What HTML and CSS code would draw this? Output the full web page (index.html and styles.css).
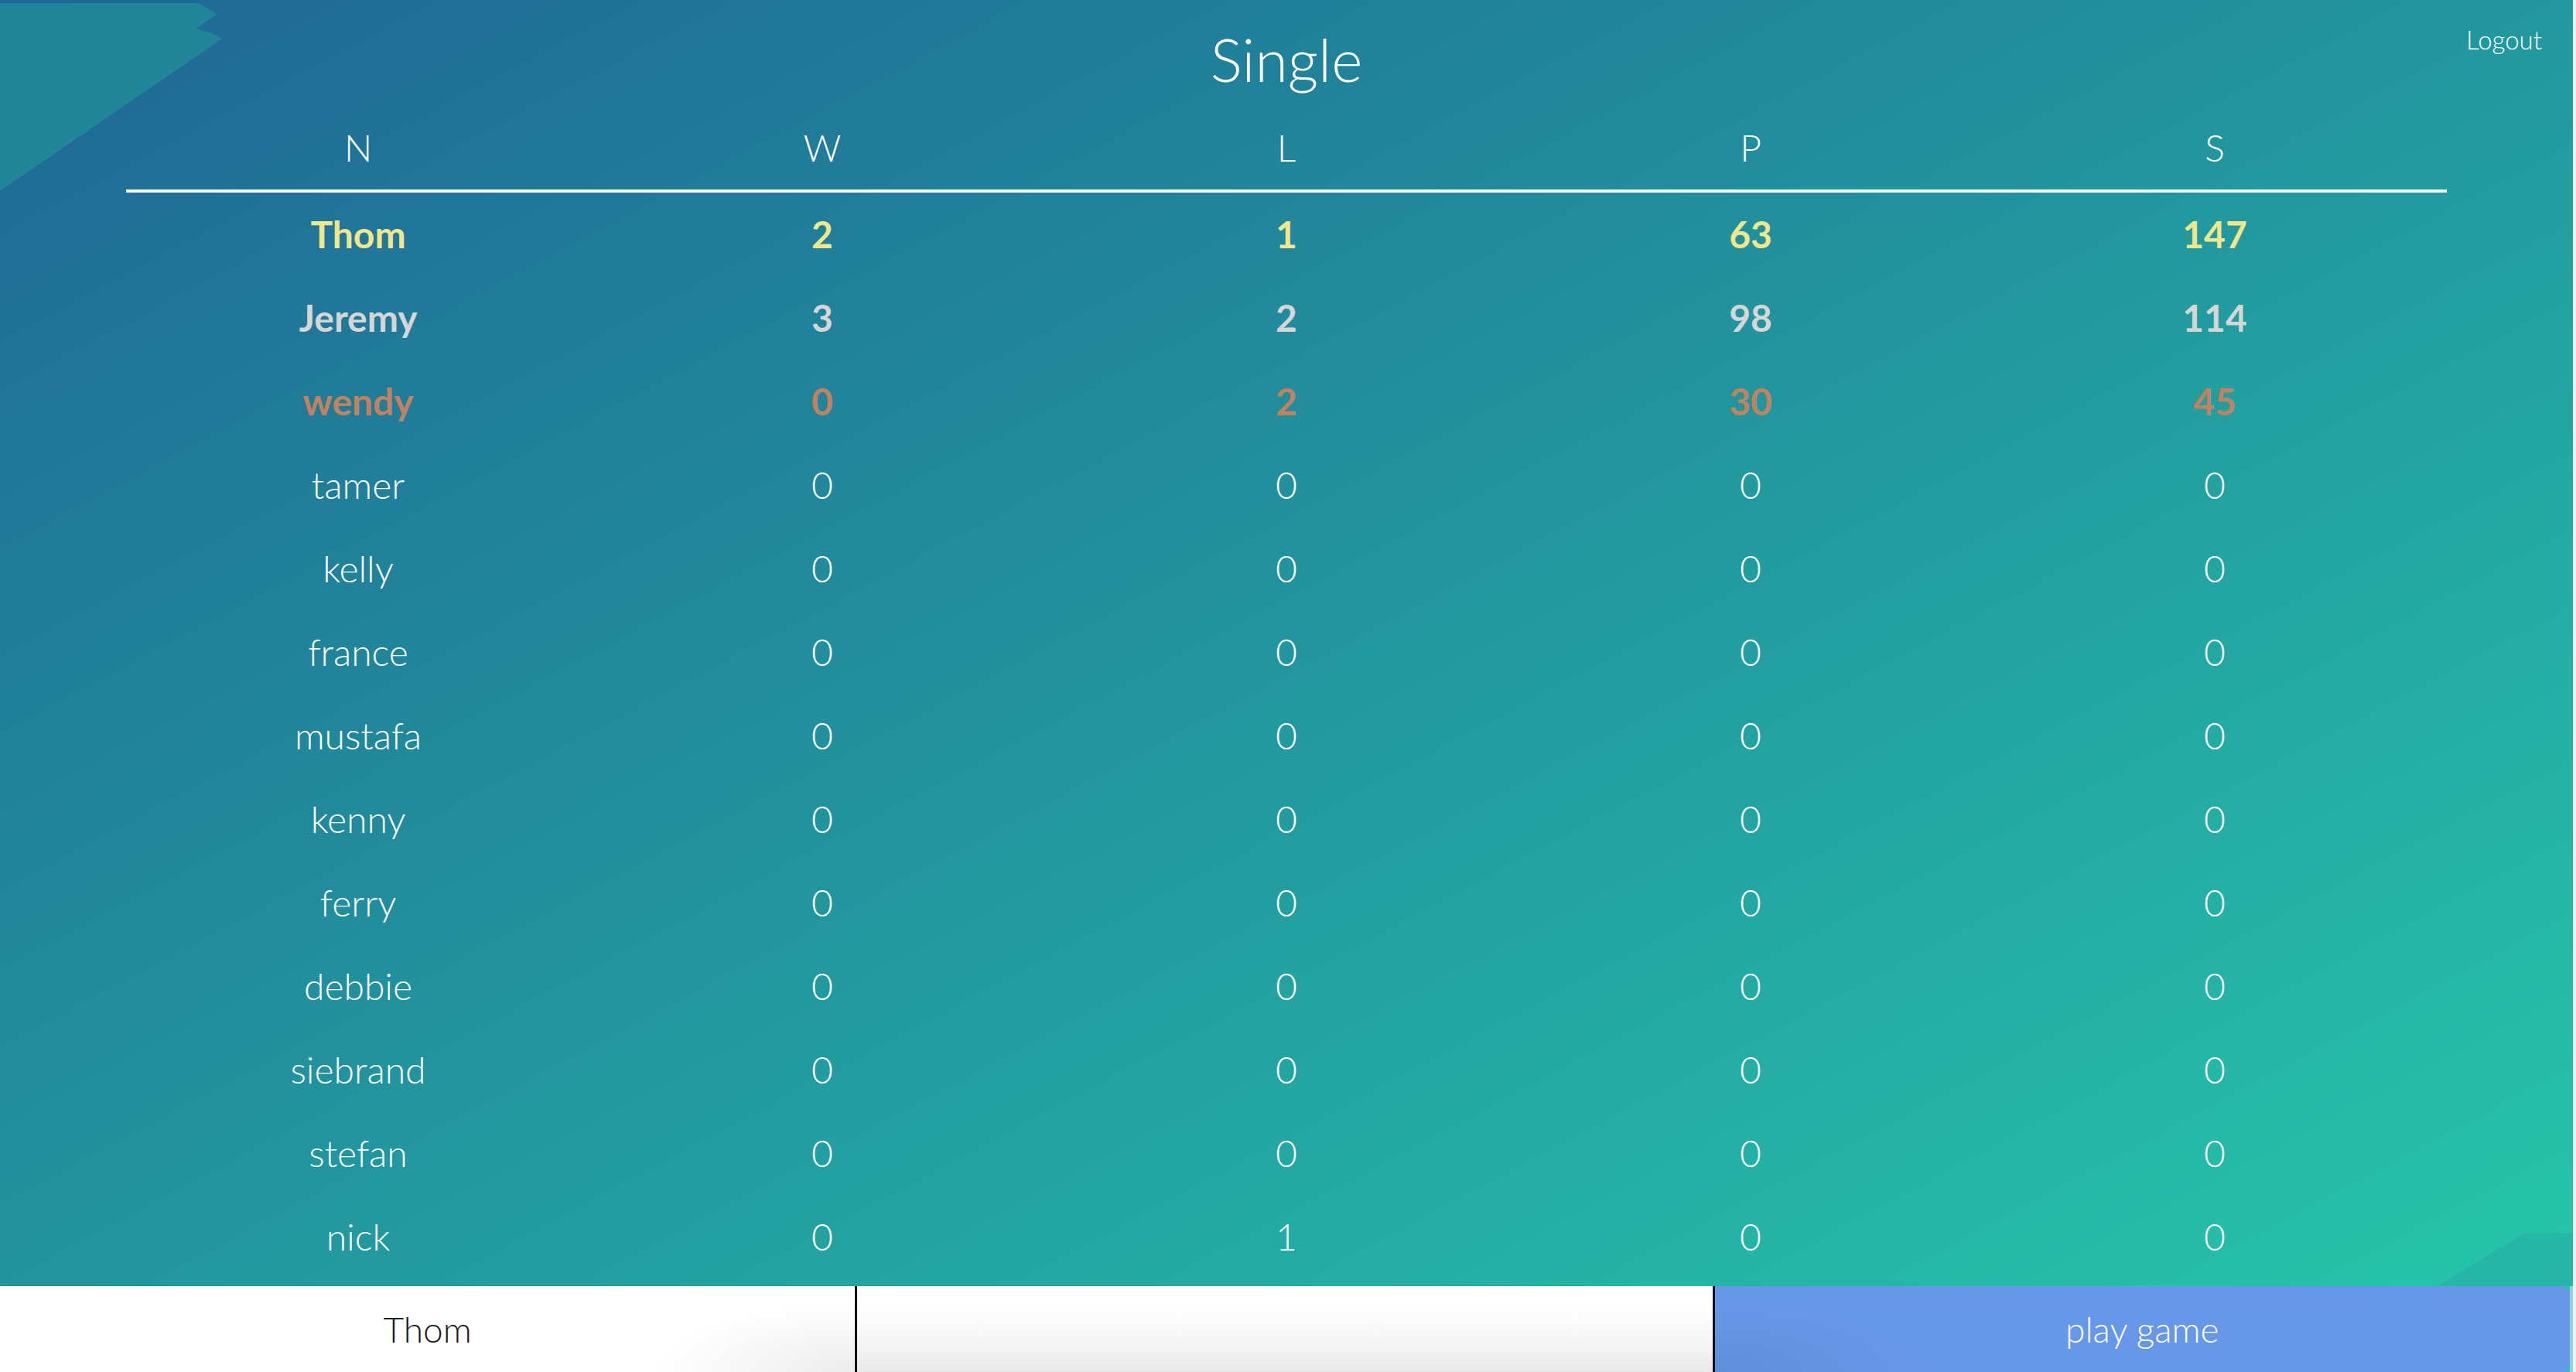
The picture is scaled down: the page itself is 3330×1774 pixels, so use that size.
FILE: index.html
```html
<!DOCTYPE html>
<html lang="en">
<head>
<meta charset="utf-8">
<title>Single</title>
<link rel="stylesheet" href="styles.css">
</head>
<body>
<div class="page">
  <svg class="bg-shapes" viewBox="0 0 3326 1774" preserveAspectRatio="none" aria-hidden="true">
    <polygon class="shape-light" points="0,4 256,4 281,18 254,37 274,43 287,50 0,247"/>
    <polygon class="shape-dark" points="3150,1663 3263,1595 3326,1595 3326,1663"/>
  </svg>

  <header class="top">
    <h1 class="title">Single</h1>
    <a class="logout" href="#">Logout</a>
  </header>

  <table class="scores">
    <thead>
      <tr><th>N</th><th>W</th><th>L</th><th>P</th><th>S</th></tr>
    </thead>
    <tbody>
      <tr class="gold"><td>Thom</td><td>2</td><td>1</td><td>63</td><td>147</td></tr>
      <tr class="silver"><td>Jeremy</td><td>3</td><td>2</td><td>98</td><td>114</td></tr>
      <tr class="bronze"><td>wendy</td><td>0</td><td>2</td><td>30</td><td>45</td></tr>
      <tr><td>tamer</td><td>0</td><td>0</td><td>0</td><td>0</td></tr>
      <tr><td>kelly</td><td>0</td><td>0</td><td>0</td><td>0</td></tr>
      <tr><td>france</td><td>0</td><td>0</td><td>0</td><td>0</td></tr>
      <tr><td>mustafa</td><td>0</td><td>0</td><td>0</td><td>0</td></tr>
      <tr><td>kenny</td><td>0</td><td>0</td><td>0</td><td>0</td></tr>
      <tr><td>ferry</td><td>0</td><td>0</td><td>0</td><td>0</td></tr>
      <tr><td>debbie</td><td>0</td><td>0</td><td>0</td><td>0</td></tr>
      <tr><td>siebrand</td><td>0</td><td>0</td><td>0</td><td>0</td></tr>
      <tr><td>stefan</td><td>0</td><td>0</td><td>0</td><td>0</td></tr>
      <tr><td>nick</td><td>0</td><td>1</td><td>0</td><td>0</td></tr>
    </tbody>
  </table>

  <footer class="controls">
    <div class="field player">Thom</div>
    <div class="field opponent"></div>
    <button class="play" type="button">play game</button>
  </footer>
</div>
</body>
</html>
```

FILE: styles.css
```css
html {
  background: #eef0f0;
}

body {
  margin: 0;
  font-family: Lato, "Open Sans", "Liberation Sans", sans-serif;
}

.page {
  position: relative;
  width: 3326px;
  height: 1774px;
  overflow: hidden;
  display: flex;
  flex-direction: column;
  background: linear-gradient(to bottom right, #1f6795 0%, #22979f 50%, #26c8aa 100%);
}

.bg-shapes {
  position: absolute;
  top: 0;
  left: 0;
  width: 100%;
  height: 100%;
  z-index: 0;
}

.shape-light {
  fill: #21869a;
}

.shape-dark {
  fill: #25b6a7;
}

.top,
.scores,
.controls {
  position: relative;
  z-index: 1;
}

.top {
  display: grid;
  grid-template-columns: 1fr auto 1fr;
  align-items: start;
  padding: 30px 40px 0;
}

.title {
  grid-column: 2;
  margin: 0;
  font-size: 77px;
  font-weight: 300;
  line-height: 1.2;
  color: #ffffff;
}

.logout {
  grid-column: 3;
  justify-self: end;
  margin-top: 2px;
  font-size: 33px;
  font-weight: 300;
  line-height: 1.2;
  color: #ffffff;
  text-decoration: none;
}

.scores {
  width: 3000px;
  margin: 0 auto;
  border-collapse: collapse;
  table-layout: fixed;
  color: #ffffff;
  font-size: 48px;
  line-height: 1.2;
}

.scores th {
  padding: 40px 0 25px;
  font-weight: 300;
  text-align: center;
  border-bottom: 4px solid #ffffff;
}

.scores td {
  height: 108px;
  padding: 0;
  text-align: center;
  vertical-align: middle;
  font-weight: 300;
}

.scores .gold td {
  color: #f0e68c;
  font-weight: 700;
}

.scores .silver td {
  color: #d6d6d6;
  font-weight: 700;
}

.scores .bronze td {
  color: #c2825f;
  font-weight: 700;
}

.controls {
  margin-top: auto;
  height: 111px;
  display: flex;
  border-right: 4px solid #8dd5dc;
}

.field,
.play {
  flex: 1 1 0;
  display: flex;
  align-items: center;
  justify-content: center;
  font-family: Lato, "Open Sans", "Liberation Sans", sans-serif;
  font-size: 46px;
  font-weight: 300;
}

.player {
  background: radial-gradient(ellipse 260px 90px at 100% 100%, #ececec, rgba(255, 255, 255, 0)) #ffffff;
  color: #1a1a1a;
}

.opponent {
  border-left: 3px solid #111111;
  background: linear-gradient(#ffffff 25%, #f4f4f4 70%, #e8e8e8 100%);
}

.play {
  margin: 0;
  padding: 0;
  border: 0;
  border-left: 3px solid #111111;
  border-radius: 0 10px 10px 0;
  background: radial-gradient(ellipse 260px 90px at 0% 100%, #5f8fda, rgba(103, 151, 232, 0)) #6797e8;
  color: #ffffff;
}
```
